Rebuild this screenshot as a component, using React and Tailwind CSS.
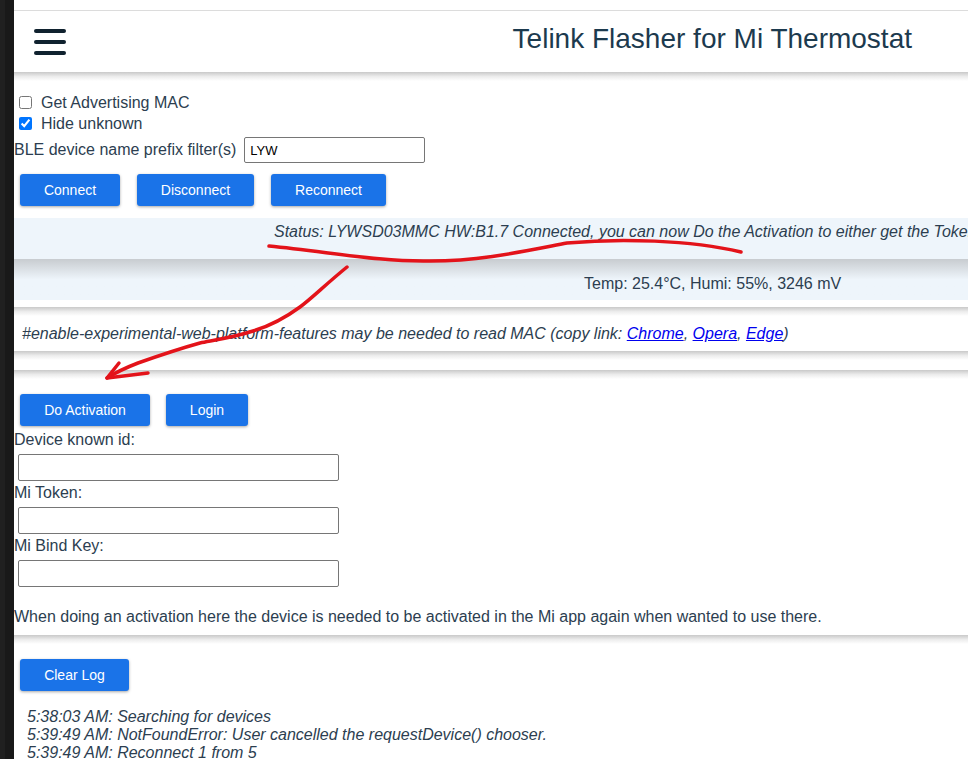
import React from "react";

const font = { fontFamily: '"Liberation Sans", Arial, sans-serif' };

function Btn({ children, className = "" }) {
  return (
    <button
      className={
        "h-[32px] rounded-[3px] bg-[#1a73e8] text-[14px] text-white shadow-[0_1px_3px_rgba(0,0,0,0.35)] " +
        className
      }
    >
      {children}
    </button>
  );
}

function Shade({ className = "" }) {
  return (
    <div
      className={
        "h-[9px] bg-linear-to-b from-[#c9c9c9] via-[#ececec] to-white " +
        className
      }
    />
  );
}

function Field({ label }) {
  return (
    <div>
      <div className="h-[18px] leading-[18px]">{label}</div>
      <input
        type="text"
        className="ml-[4px] mt-[5px] block h-[27px] w-[321px] rounded-[2px] border border-[#767676] bg-white"
      />
    </div>
  );
}

export default function App() {
  return (
    <div
      className="relative flex h-[759px] w-[968px] overflow-hidden bg-white text-[16px] text-[#2c3e50]"
      style={font}
    >
      {/* editor strip on the left */}
      <div className="flex w-[14px] shrink-0">
        <div className="w-[5px] bg-[#202020]" />
        <div className="w-[9px] bg-[#191919]" />
      </div>

      <div className="min-w-0 flex-1">
        <div className="h-[11px] border-b border-[#dcdcdc]" />

        <header className="flex h-[61px] items-center justify-between bg-white pl-[20px] pr-[56px]">
          <div className="flex w-[32px] flex-col gap-[7px]">
            <span className="h-[4px] rounded-full bg-[#10222f]" />
            <span className="h-[4px] rounded-full bg-[#10222f]" />
            <span className="h-[4px] rounded-full bg-[#10222f]" />
          </div>
          <h1 className="pb-[6px] text-[28px] text-[#1c3a4e]">
            Telink Flasher for Mi Thermostat
          </h1>
        </header>
        <Shade />

        <div className="mt-[11px] flex h-[21px] items-center">
          <input type="checkbox" className="ml-[5px] mr-[9px] h-[13px] w-[13px]" />
          <span>Get Advertising MAC</span>
        </div>
        <div className="flex h-[21px] items-center">
          <input
            type="checkbox"
            defaultChecked
            className="ml-[5px] mr-[9px] h-[13px] w-[13px]"
          />
          <span>Hide unknown</span>
        </div>
        <div className="mt-[3px] flex items-center">
          <span>BLE device name prefix filter(s)</span>
          <input
            type="text"
            defaultValue="LYW"
            className="ml-[8px] h-[26px] w-[181px] rounded-[2px] border border-[#767676] px-[5px] text-[13px] text-black"
          />
        </div>

        <div className="mt-[11px] flex gap-[17px] pl-[6px]">
          <Btn className="w-[100px]">Connect</Btn>
          <Btn className="w-[117px]">Disconnect</Btn>
          <Btn className="w-[115px]">Reconnect</Btn>
        </div>

        <div className="mt-[12px] h-[41px] overflow-hidden whitespace-nowrap bg-[#eef5fb] pl-[260px] pt-[4px] italic leading-[20px]">
          Status: LYWSD03MMC HW:B1.7 Connected, you can now Do the Activation to
          either get the Token and Bind Key
        </div>
        <div className="flex h-[41px] items-center whitespace-nowrap bg-linear-to-b from-[#c8ccd0] via-[#eef5fb] to-[#eef5fb] pl-[570px] pt-[9px]">
          Temp: 25.4°C, Humi: 55%, 3246 mV
        </div>

        <div className="h-[7px]" />
        <Shade />
        <div className="flex h-[35px] items-center whitespace-nowrap pl-[8px] italic">
          <span>
            #enable-experimental-web-platform-features may be needed to read MAC
            (copy link:{" "}
            <a href="#" className="text-[#0000ee] underline">
              Chrome
            </a>
            ,{" "}
            <a href="#" className="text-[#0000ee] underline">
              Opera
            </a>
            ,{" "}
            <a href="#" className="text-[#0000ee] underline">
              Edge
            </a>
            )
          </span>
        </div>
        <Shade />
        <div className="h-[10px]" />
        <Shade />

        <div className="mt-[15px] flex gap-[16px] pl-[6px]">
          <Btn className="w-[130px]">Do Activation</Btn>
          <Btn className="w-[82px]">Login</Btn>
        </div>

        <div className="mt-[5px] flex flex-col gap-[3px]">
          <Field label="Device known id:" />
          <Field label="Mi Token:" />
          <Field label="Mi Bind Key:" />
        </div>

        <div className="mt-[20px] h-[20px] whitespace-nowrap leading-[20px]">
          When doing an activation here the device is needed to be activated in
          the Mi app again when wanted to use there.
        </div>
        <div className="h-[8px]" />
        <Shade />

        <div className="mt-[15px] pl-[6px]">
          <Btn className="w-[109px]">Clear Log</Btn>
        </div>

        <div className="mt-[17px] pl-[13px] italic leading-[18px]">
          <div>5:38:03 AM: Searching for devices</div>
          <div>
            5:39:49 AM: NotFoundError: User cancelled the requestDevice() chooser.
          </div>
          <div>5:39:49 AM: Reconnect 1 from 5</div>
        </div>
      </div>

      {/* red hand-drawn marks over the page */}
      <svg
        className="pointer-events-none absolute left-0 top-0"
        width="968"
        height="759"
        viewBox="0 0 968 759"
        fill="none"
      >
        <path
          d="M269 246 C330 252 380 262 430 261 C480 261 520 252 567 243 C620 238 690 240 741 252"
          stroke="#e3131a"
          strokeWidth="3.5"
          strokeLinecap="round"
        />
        <path
          d="M347 267 C325 285 312 298 300 307 C285 318 270 326 253 331 C235 337 215 340 200 343 C175 350 155 357 138 363 C125 368 115 373 107 378"
          stroke="#e3131a"
          strokeWidth="3.5"
          strokeLinecap="round"
        />
        <path
          d="M119 363 L107 378 L148 373"
          stroke="#e3131a"
          strokeWidth="3.5"
          strokeLinecap="round"
          strokeLinejoin="round"
        />
      </svg>
    </div>
  );
}
